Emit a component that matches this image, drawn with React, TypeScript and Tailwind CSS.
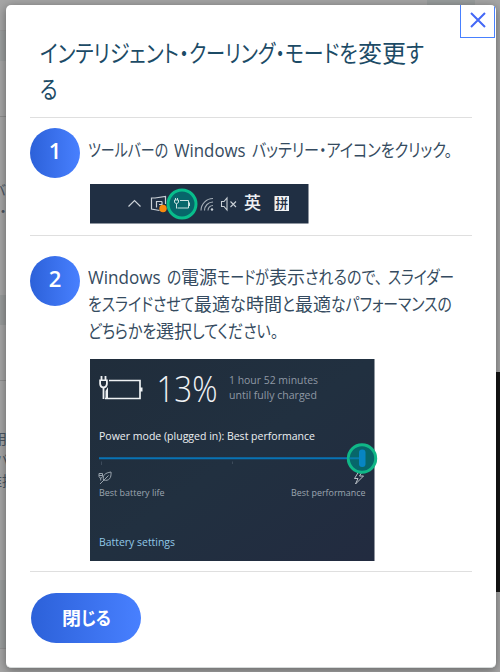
import { useLayoutEffect, useRef, useState } from 'react';

type Segment = [text: string, width: number];

const uiFont = 'font-["Open_Sans","Noto_Sans_CJK_JP",sans-serif]';

function Fit({ text, width }: { text: string; width: number }) {
  const ref = useRef<HTMLSpanElement>(null);
  const [scale, setScale] = useState(1);
  useLayoutEffect(() => {
    const measure = () => {
      if (ref.current) setScale(width / ref.current.offsetWidth);
    };
    measure();
    document.fonts?.ready.then(measure);
  }, [width, text]);
  return (
    <span className="block shrink-0" style={{ width }}>
      <span
        ref={ref}
        className="inline-block origin-left whitespace-pre [font-feature-settings:'palt']"
        style={{ transform: `scaleX(${scale})` }}
      >
        {text}
      </span>
    </span>
  );
}

function Line({ segments }: { segments: Segment[] }) {
  return (
    <span className="flex">
      {segments.map(([text, width], i) => (
        <Fit key={i} text={text} width={width} />
      ))}
    </span>
  );
}

function Badge({ n }: { n: number }) {
  return (
    <div className="flex size-[50px] shrink-0 items-center justify-center rounded-full bg-linear-to-r from-[#2c61d9] to-[#4880ff] pb-[5px] text-[22px] font-semibold text-white">
      {n}
    </div>
  );
}

function TaskbarPicture() {
  return (
    <svg width="219" height="40" viewBox="0 0 219 40" className="block">
      <rect width="218.5" height="39.5" fill="#202f43" />
      <g fill="none" stroke="#c9d0d6" strokeWidth="1.2">
        <path d="M38.500 22.500L44.500 16.500L50.500 22.500" />
        <path d="M75.500 20V12.500L65 14H61.500V25L69.500 26.500" />
        <path d="M66.500 23.500V17.500H72M72 17.500V20.500H69" />
      </g>
      <circle cx="73" cy="24.500" r="3.700" fill="#f88a0d" />
      <circle cx="92" cy="20" r="14" fill="#07666a" stroke="#08bd8b" strokeWidth="3" />
      <g fill="none" stroke="#c8e0df" strokeWidth="1">
        <path d="M90 16.500H98.500V24H87.500M99.500 18.500V22" />
        <path d="M84.500 16H88.500V18Q88.300 19.500 86.500 19.500Q84.700 19.500 84.500 18ZM86.500 20V24.500M85.500 14V16M87.500 14V16" />
      </g>
      <g fill="none" stroke="#a6afb8" strokeWidth="1.100">
        <path d="M111 26.500A12 12 0 0 1 123 14.500M114.500 26.500A8.500 8.500 0 0 1 123 18M118 26.500A5 5 0 0 1 123 21.500" />
        <path d="M131.500 17.500H134L137 14V26L134 22.500H131.500Z" stroke="#c9d0d6" />
        <path d="M140.500 17.500L146 23M146 17.500L140.500 23" stroke="#c9d0d6" />
      </g>
      <circle cx="122" cy="25.500" r="1.200" fill="#c9d0d6" />
      <text x="154" y="25" fontSize="17" fontWeight="500" fill="#edf0f2" fontFamily="Noto Sans CJK SC, sans-serif">英</text>
      <rect x="184.500" y="12" width="14.500" height="15" fill="#f0f2f3" />
      <text x="185.400" y="24.200" fontSize="12.700" fontWeight="500" fill="#202f43" fontFamily="Noto Sans CJK SC, sans-serif">拼</text>
    </svg>
  );
}

function PowerPicture() {
  return (
    <svg width="292" height="202" viewBox="0 0 292 202" className="block" fontFamily="Open Sans, Noto Sans, sans-serif">
      <defs>
        <linearGradient id="panel" x1="0" y1="0" x2="1" y2="1">
          <stop offset="0" stopColor="#202d3b" />
          <stop offset=".5" stopColor="#213040" />
          <stop offset="1" stopColor="#222b40" />
        </linearGradient>
      </defs>
      <rect width="284.500" height="202" fill="url(#panel)" />
      <g fill="none" stroke="#eef1f3" strokeWidth="1.700">
        <path d="M19 21.500H50V39.500H15" />
        <path d="M11.500 17V21.500M15.500 17V21.500M13.500 28V40" strokeWidth="1.800" />
      </g>
      <rect x="50" y="28.500" width="2.500" height="4" fill="#eef1f3" />
      <path d="M9.200 20.500H17.800V25Q17.500 29 13.500 29.500Q9.500 29 9.200 25ZM11 22V25Q11.500 27.500 13.500 27.500Q15.500 27.500 16 25V22Z" fill="#eef1f3" fillRule="evenodd" />
      <path d="M15.500 39V32L18 28V39Z" fill="#eef1f3" />
      <text x="66.500" y="43.300" fontSize="36" fontWeight="300" fill="#f1f3f5" textLength="61" lengthAdjust="spacingAndGlyphs">13%</text>
      <g fontSize="10.500" fill="#8f98a4">
        <text x="139" y="25" textLength="89" lengthAdjust="spacingAndGlyphs">1 hour 52 minutes</text>
        <text x="139" y="40" textLength="88" lengthAdjust="spacingAndGlyphs">until fully charged</text>
      </g>
      <text x="9" y="80.500" fontSize="10.800" fill="#eceff2" textLength="216" lengthAdjust="spacingAndGlyphs">Power mode (plugged in): Best performance</text>
      <path d="M9 99.300H271" stroke="#0873b5" strokeWidth="2" />
      <path d="M11.500 102.500V106M142.500 102.500V105" stroke="#3d4b5b" />
      <g fill="none" stroke="#99a3ad" strokeWidth="1">
        <path d="M13.500 121C12.500 116 15 114 21 113C21.500 119 19 122.500 13.500 121ZM10 125L18.500 116.500" />
        <path d="M9 114.500H12.500V117.500Q12 119 10.700 119Q9.400 119 9 117.500ZM9 116.500H12.500M10.700 119V121.500" />
        <path d="M268.500 113L264.500 119.500H268L265.500 125L273.500 117H269.500L272 113" stroke="#bbc2c8" />
      </g>
      <circle cx="272" cy="99.500" r="13.700" fill="#07666a" stroke="#10b787" strokeWidth="3" />
      <path d="M259.500 99.300H270" stroke="#087ba9" strokeWidth="2" />
      <rect x="269" y="90.500" width="6.500" height="17.500" rx="3" fill="#0785c3" />
      <g fontSize="9.500" fill="#9da6b0">
        <text x="9" y="137" textLength="65.500" lengthAdjust="spacingAndGlyphs">Best battery life</text>
        <text x="201" y="137" textLength="74.500" lengthAdjust="spacingAndGlyphs">Best performance</text>
      </g>
      <text x="9" y="187" fontSize="11" fill="#91c8e7" textLength="76" lengthAdjust="spacingAndGlyphs">Battery settings</text>
    </svg>
  );
}

function PageBehind() {
  return (
    <div className="flex h-[672px] w-[500px] justify-between bg-[#a5a5a5]">
      <div className="flex w-[200px] flex-col text-[14px] leading-[21px] text-[#4b5663]">
        <div className="h-[31px] border-b border-[#999]" />
        <div className="h-[30px] bg-[#9b9e9e]" />
        <div className="h-[56px] border-b border-[#8e8e8e]" />
        <div className="h-[178px] overflow-hidden pt-[62px]">
          <p className="-ml-[8px]">バ</p>
          <p className="-ml-[4px] tracking-tighter">・</p>
        </div>
        <div className="h-[30px] bg-[#989b9b]" />
        <div className="h-[56px] border-b border-[#8e8e8e]" />
        <div className="h-[199px] pt-[47px]">
          <p className="-ml-[7px]">用</p>
          <p className="-ml-[5px]">バ</p>
          <p className="-ml-[12px]">維持</p>
        </div>
        <div className="h-[69px] border-b border-[#929292] bg-[#9b9e9e]" />
      </div>
      <div className="flex w-[73px] flex-col">
        <div className="h-[100px] w-[48px] bg-[#989c9c]" />
        <div className="mt-[272px] h-[220px] bg-[#151515]" />
      </div>
    </div>
  );
}

export default function App() {
  return (
    <div className={`relative h-[672px] w-[500px] overflow-hidden ${uiFont}`}>
      <PageBehind />
      <div
        role="dialog"
        className="absolute top-[5px] left-[6px] h-[663px] w-[490px] overflow-hidden rounded-[5px] border-b border-[#d6dada] bg-white px-6 text-[#354b60] shadow-[0_2px_10px_rgba(0,0,0,0.4)]"
      >
        <button
          aria-label="close"
          className="absolute -top-px right-px flex h-[34px] w-[35px] items-center justify-center border border-[#4880ff] text-[#4468f6]"
        >
          <svg width="16" height="16" viewBox="0 0 16 16" fill="none" stroke="currentColor" strokeWidth="2" className="mb-[3px]">
            <path d="M1 1L15 15M15 1L1 15" />
          </svg>
        </button>

        <h2 className="h-[113px] border-b border-[#dfdfdf] pt-[30px] pl-[10px] text-[24px] leading-9 text-[#1c4b66]">
          <Line segments={[['インテリジェント・', 149], ['クーリング・', 96], ['モードを', 73], ['変更', 48], ['す', 18]]} />
          <Line segments={[['る', 18]]} />
        </h2>

        <section className="flex h-[118px] border-b border-[#dfdfdf] pt-[10px]">
          <Badge n={1} />
          <div className="pt-[9px] pl-2 text-[18px] leading-[27px]">
            <Line segments={[['ツールバーの', 80], [' ', 6], ['Windows', 72], [' ', 6], ['バッテリー・アイコンをクリック。', 200]]} />
            <div className="mt-5 ml-[2px]">
              <TaskbarPicture />
            </div>
          </div>
        </section>

        <section className="flex h-[336px] border-b border-[#dfdfdf] pt-5">
          <Badge n={2} />
          <div className="pt-2 pl-2 text-[18px] leading-[27px]">
            <Line
              segments={[['Windows', 73], [' ', 6], ['の', 14], ['電源', 36], ['モードが', 52], ['表示', 36], ['されるので、', 77], [' ', 6], ['スライダー', 66]]}
            />
            <Line
              segments={[['をスライドさせて', 106], ['最適', 36], ['な', 16], ['時間', 36], ['と', 13], ['最適', 36], ['なパフォーマンスの', 121]]}
            />
            <Line segments={[['どちらかを', 68], ['選択', 36], ['してください。', 86]]} />
            <div className="mt-[14px] ml-[2px]">
              <PowerPicture />
            </div>
          </div>
        </section>

        <button className="mt-[21px] ml-px flex h-[50px] w-[110px] items-center justify-center rounded-full bg-linear-to-r from-[#2c61d9] to-[#4880ff] text-[18px] font-semibold text-white">
          <Line segments={[['閉', 19], ['じる', 30]]} />
        </button>
      </div>
    </div>
  );
}
